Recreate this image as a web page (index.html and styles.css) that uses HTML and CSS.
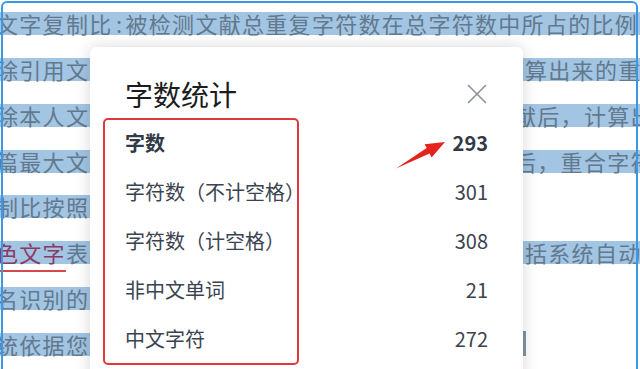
FILE: index.html
```html
<!DOCTYPE html>
<html lang="zh-CN">
<head>
<meta charset="utf-8">
<title>字数统计</title>
<link rel="stylesheet" href="styles.css">
</head>
<body>
<div class="page">
  <div class="doc">
    <div class="line"><span class="hl full">文字复制比<span class="colon">:</span>被检测文献总重复字符数在总字符数中所占的比例</span></div>
    <div class="line"><div class="left"><span class="hl">除引用文献复制比：去除系统识别为引用的文献后，计</span></div><div class="right"><span class="hl pad">算出来的重合字符数</span></div></div>
    <div class="line"><div class="left"><span class="hl">除本人文献复制比：去除作者本人文</span></div><div class="right"><span class="hl cut">献后，计算出来的</span></div></div>
    <div class="line"><div class="left"><span class="hl">篇最大文字复制比：被检测文献与所有相似文献比对</span></div><div class="right"><span class="hl cut">后，重合字符数</span></div></div>
    <div class="line"><div class="left"><span class="hl">制比按照标准计算</span></div></div>
    <div class="line"><div class="left"><span class="hl"><span class="red">色文字</span>表示可能存在引用，包</span></div><div class="right"><span class="hl pad">括系统自动识别</span></div></div>
    <div class="line"><div class="left"><span class="hl">名识别的文献</span></div></div>
    <div class="line"><div class="left"><span class="hl">统依据您的文献</span></div><div class="right"><span class="caret"></span></div></div>
  </div>
  <div class="frame"></div>

  <div class="modal">
    <div class="modal-head">
      <h1 class="title">字数统计</h1>
      <svg class="close" width="20" height="20" viewBox="0 0 20 20"><path d="M1 1 L19 19 M19 1 L1 19" stroke="#8b9099" stroke-width="1.6" fill="none"/></svg>
    </div>
    <div class="stats">
      <div class="row strong"><span>字数</span><span>293</span></div>
      <div class="row"><span>字符数（不计空格）</span><span>301</span></div>
      <div class="row"><span>字符数（计空格）</span><span>308</span></div>
      <div class="row"><span>非中文单词</span><span>21</span></div>
      <div class="row"><span>中文字符</span><span>272</span></div>
    </div>
    <div class="redbox"></div>
  </div>

  <svg class="arrow" width="640" height="369" viewBox="0 0 640 369"><polygon points="396,168.5 426.7,148.1 424.6,144.2 445,142 431.6,157.4 429.5,153.5" fill="#e5231d"/></svg>
</div>
</body>
</html>
```

FILE: styles.css
```css
html, body {
  margin: 0;
  padding: 0;
  background: #ffffff;
}
.page {
  position: relative;
  width: 640px;
  height: 369px;
  overflow: hidden;
  font-family: "Noto Sans CJK SC", "Noto Sans", sans-serif;
}
.doc {
  display: flex;
  flex-direction: column;
  gap: 22.86px;
  padding-top: 12px;
}
.line {
  display: grid;
  grid-template-columns: 523px 1fr;
  height: 23px;
  font-size: 22px;
  line-height: 23px;
  letter-spacing: 1.3px;
  color: #62798e;
  white-space: nowrap;
}
.left, .right {
  overflow-x: clip;
  overflow-y: visible;
}
.hl {
  display: inline-block;
  background: #a2c5e3;
  height: 23px;
  line-height: 23px;
}
.left .hl, .full {
  margin-left: -4px;
}
.full {
  grid-column: 1 / -1;
  justify-self: start;
  padding-right: 2px;
}
.colon {
  display: inline-block;
  width: 13px;
  text-align: center;
  letter-spacing: 0;
}
.pad {
  padding-left: 2px;
}
.cut {
  margin-left: -9px;
}
.red {
  color: #8c3a63;
  text-decoration: underline;
  text-decoration-color: #d6474a;
  text-decoration-thickness: 2px;
  text-underline-offset: 8px;
}
.caret {
  display: inline-block;
  width: 3px;
  height: 25px;
  margin-top: -2px;
  background: #8393a3;
}
.frame {
  position: absolute;
  left: 1px;
  top: 1px;
  right: 2px;
  bottom: -20px;
  border: 2px solid #3d98e4;
  border-radius: 6px;
  pointer-events: none;
}
.modal {
  position: absolute;
  left: 90px;
  top: 47px;
  width: 433px;
  height: 340px;
  background: #ffffff;
  border-radius: 6px;
  box-shadow: 0 0 16px rgba(0, 0, 0, 0.16);
  box-sizing: border-box;
  padding-top: 27px;
}
.modal-head {
  display: flex;
  justify-content: space-between;
  align-items: center;
  padding: 0 36px 0 35px;
  height: 40px;
}
.title {
  margin: 0;
  font-size: 28px;
  font-weight: 400;
  line-height: 40px;
  color: #1c1c1c;
}
.close {
  display: block;
}
.stats {
  display: flex;
  flex-direction: column;
  padding: 4px 35px 0 35px;
}
.row {
  display: flex;
  justify-content: space-between;
  align-items: center;
  height: 49px;
  font-size: 20px;
  color: #3b4350;
}
.row.strong {
  font-weight: 700;
  color: #323a47;
}
.redbox {
  position: absolute;
  left: 13px;
  top: 71px;
  width: 196px;
  height: 247px;
  box-sizing: border-box;
  border: 2px solid #e0393b;
  border-radius: 5px;
}
.arrow {
  position: absolute;
  left: 0;
  top: 0;
  pointer-events: none;
}
```
